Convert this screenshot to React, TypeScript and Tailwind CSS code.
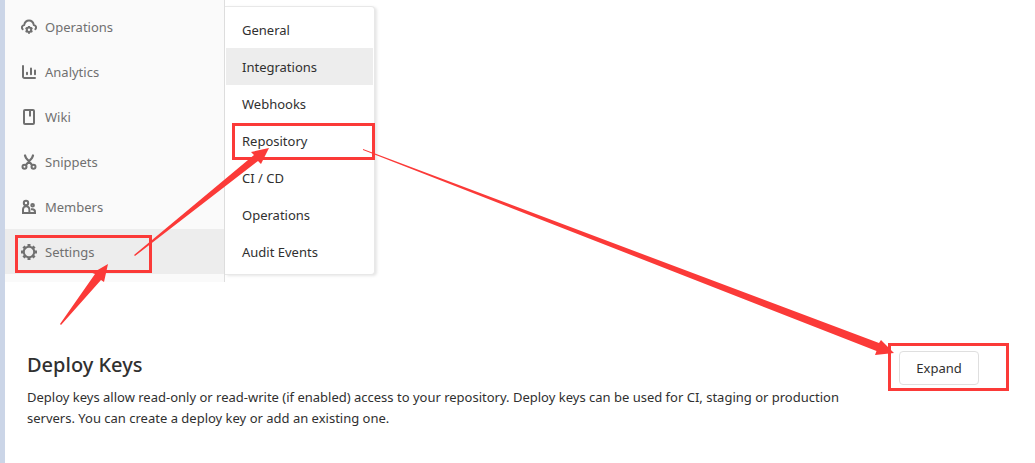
import React from "react";

type IconProps = { children: React.ReactNode };

function Icon({ children }: IconProps) {
  return (
    <svg viewBox="0 0 16 16" className="size-4 shrink-0" fill="none" stroke="currentColor" strokeWidth="2" aria-hidden="true">
      {children}
    </svg>
  );
}

const navItems = [
  {
    label: "Operations",
    icon: (
      <Icon>
        <path d="M1.600 10.200A2.600 2.600 0 0 1 3.200 5.900C3.800 3.300 5.600 1.600 8 1.600s4.200 1.700 4.800 4.300a2.600 2.600 0 0 1 1.600 4.300" strokeLinecap="round" />
        <circle cx="8" cy="10.800" r="2.200" />
        <path d="M8 7v1.500M8 13.200v1.500M4.600 8.900l1.400.8M10 12l1.400.8M4.600 12.800l1.400-.8M10 9.700l1.400-.8" strokeWidth="2" />
      </Icon>
    ),
  },
  {
    label: "Analytics",
    icon: (
      <Icon>
        <path d="M2 2v10.500A1.500 1.500 0 0 0 3.500 14H14" strokeLinecap="round" />
        <path d="M6 8.800v1.400M10 4.500v5.700M14 6.500v3.700" strokeLinecap="round" />
      </Icon>
    ),
  },
  {
    label: "Wiki",
    icon: (
      <Icon>
        <rect x="3" y="1" width="10" height="14" rx="1" />
        <path d="M9 1v6.500" />
      </Icon>
    ),
  },
  {
    label: "Snippets",
    icon: (
      <Icon>
        <circle cx="3.500" cy="12.800" r="2" />
        <circle cx="12.500" cy="12.800" r="2" />
        <path d="M4 1.500l1 2.500 6.300 7.200M12 1.500L11 4l-6.300 7.200" strokeLinecap="round" strokeWidth="2.200" />
      </Icon>
    ),
  },
  {
    label: "Members",
    icon: (
      <Icon>
        <circle cx="5" cy="4" r="2.200" />
        <path d="M2 14v-3.500a3.200 3.200 0 0 1 6.400 0V14z" />
        <circle cx="11.600" cy="6.300" r="1.300" />
        <path d="M10 10.200h1.300a2.700 2.700 0 0 1 2.700 2.700V14H9" />
      </Icon>
    ),
  },
  {
    label: "Settings",
    icon: (
      <Icon>
        <circle cx="8" cy="8" r="5.200" />
        <path d="M8 0v3M8 13v3M0 8h3M13 8h3M2.500 2.500l1.700 1.700M11.800 11.800l1.700 1.700M2.500 13.500l1.700-1.700M11.800 4.200l1.700-1.700" strokeWidth="3" />
      </Icon>
    ),
  },
];

const menuItems = ["General", "Integrations", "Webhooks", "Repository", "CI / CD", "Operations", "Audit Events"];

export default function App() {
  return (
    <div className="relative flex min-h-screen bg-white font-['Noto_Sans',sans-serif] text-[13px] text-[#303030]">
      <div className="w-[5px] shrink-0 bg-[#cbd5e7]" />
      <div className="min-w-0 grow">
        <div className="flex items-start">
          <nav aria-label="Project" className="w-[220px] shrink-0 border-r border-[#dedede] bg-[#fafafa] pt-1 pb-2">
            {navItems.map(({ label, icon }) => (
              <a
                key={label}
                href="#"
                className={`relative flex h-[45px] items-center gap-2 px-4 text-[#707070] ${label === "Settings" ? "bg-[#ededed]" : ""}`}
              >
                {icon}
                <span className="pt-0.5">{label}</span>
                {label === "Settings" && (
                  <span className="absolute top-[6px] left-[10px] h-[38px] w-[137px] border-3 border-[#fb3a38]" />
                )}
              </a>
            ))}
          </nav>
          <nav
            aria-label="Settings"
            className="mt-[6px] w-[150px] shrink-0 rounded-r-sm border-y border-r border-[#e8e8e8] bg-white py-1 pr-px pl-px shadow-[2px_1px_3px_rgba(0,0,0,0.1)]"
          >
            {menuItems.map((label) => (
              <a
                key={label}
                href="#"
                className={`relative flex h-[37px] items-center px-4 pt-0.5 ${label === "Integrations" ? "bg-[#ededed]" : ""}`}
              >
                {label}
                {label === "Repository" && (
                  <span className="absolute top-px left-[6px] h-[37px] w-[143px] border-3 border-[#fb3a38]" />
                )}
              </a>
            ))}
          </nav>
        </div>
        <section className="mt-[69px] flex items-start justify-between pr-14 pl-[22px]">
          <div className="max-w-[840px]">
            <h2 className="text-xl leading-7 font-medium">Deploy Keys</h2>
            <p className="mt-2 leading-[21px]">
              Deploy keys allow read-only or read-write (if enabled) access to your repository. Deploy keys can be used for CI, staging or production servers. You can create a deploy key or add an existing one.
            </p>
          </div>
          <div className="relative">
            <button type="button" className="h-[34px] w-20 rounded border border-[#dfdfdf] bg-white pt-0.5">
              Expand
            </button>
            <span className="absolute -top-2 -left-[11px] h-12 w-[121px] border-3 border-[#fb3a38]" />
          </div>
        </section>
      </div>
      <svg viewBox="0 0 1035 463" className="pointer-events-none absolute top-0 left-0 h-[463px] w-[1035px]" fill="#fb3a38" aria-hidden="true">
        <path d="M60 324L95 274L92.500 273L108 264L104 282L101 280L61 325z" />
        <path d="M134 255L254 155L251 152L269 148L261 164L258 161L135 256z" />
        <path d="M363 149L879 343L881 340L894 353L875 355L876.500 351L363 150z" />
      </svg>
    </div>
  );
}
